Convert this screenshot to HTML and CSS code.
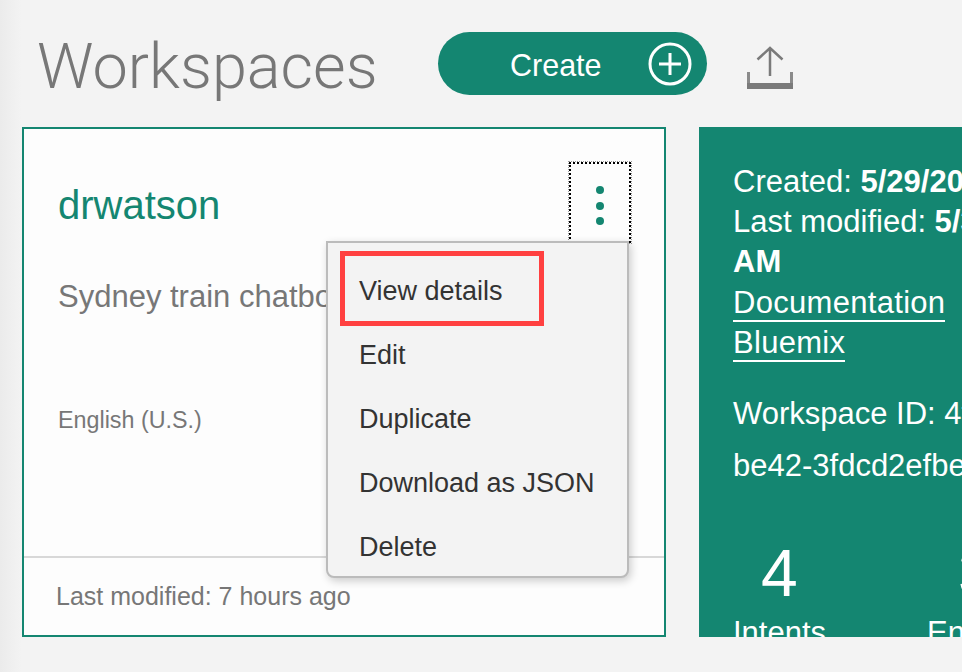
FILE: index.html
```html
<!DOCTYPE html>
<html lang="en">
<head>
  <meta charset="UTF-8">
  <meta name="viewport" content="width=device-width, initial-scale=1.0">
  <title>Workspaces</title>
  <link rel="stylesheet" href="styles.css">
</head>
<body>
  <div class="header">
    <h1>Workspaces</h1>
    <button class="create">
      <span class="create-label">Create</span>
      <svg class="plus" width="44" height="44" viewBox="0 0 44 44" fill="none" stroke="#fff">
        <circle cx="22" cy="22" r="20" stroke-width="3"/>
        <path d="M22 11v22M11 22h22" stroke-width="3"/>
      </svg>
    </button>
    <svg class="upload" width="46" height="43" viewBox="0 0 46 43" fill="none" stroke="#7a7a7a">
      <path d="M23 30V2M10.500 13.500L23 2l12.500 11.500" stroke-width="2.500"/>
      <path d="M1.500 26v14M44.500 26v14" stroke-width="3" stroke="#8a8a8a"/>
      <path d="M0 40h46" stroke-width="6"/>
    </svg>
  </div>

  <div class="row">
    <div class="card">
      <div class="card-main">
        <div class="card-top">
          <div class="card-name">drwatson</div>
          <div class="kebab"><i></i><i></i><i></i></div>
        </div>
        <div class="card-desc">Sydney train chatbot</div>
        <div class="card-lang">English (U.S.)</div>
      </div>
      <div class="card-foot">Last modified: 7 hours ago</div>

      <ul class="menu">
        <li>View details</li>
        <li>Edit</li>
        <li>Duplicate</li>
        <li>Download as JSON</li>
        <li>Delete</li>
      </ul>
      <div class="callout"></div>
    </div>

    <div class="panel">
      <div class="meta">
        <div>Created: <b>5/29/2017</b></div>
        <div>Last modified: <b>5/30/2017 10:21<br>AM</b></div>
        <div class="links">
          <div><a>Documentation</a></div>
          <div><a>Bluemix</a></div>
        </div>
      </div>
      <div class="ws-id">
        <div>Workspace ID: 4f1a93c2-7d1e-</div>
        <div class="ws-id-end">be42-3fdcd2efbe10</div>
      </div>
      <div class="stats">
        <div class="stat"><div class="num">4</div><div class="stat-label">Intents</div></div>
        <div class="stat"><div class="num">3</div><div class="stat-label">Entities</div></div>
      </div>
    </div>
  </div>
</body>
</html>
```

FILE: styles.css
```css
body {
  margin: 0;
  width: 962px;
  height: 672px;
  overflow: hidden;
  background: linear-gradient(to right, #ebebeb, #f3f3f3 22px);
  font-family: "Liberation Sans", Arial, sans-serif;
  color: #777;
}
.header {
  display: flex;
  align-items: center;
  height: 127px;
  padding-left: 37px;
  box-sizing: border-box;
}
h1 {
  margin: 6px 0 0;
  width: 401px;
  font-family: Roboto, sans-serif;
  font-weight: 300;
  font-size: 63px;
  color: #777;
}
.create {
  display: flex;
  align-items: center;
  width: 269px;
  height: 63px;
  padding: 0 15px 0 72px;
  border: none;
  border-radius: 32px;
  background: #148671;
  color: #fff;
  font-family: inherit;
  font-size: 30.500px;
}
.create-label {
  flex: 1;
  padding-top: 3px;
  text-align: left;
}
.upload {
  margin-left: 40px;
  margin-top: 8px;
}
.row {
  display: flex;
  gap: 33px;
  height: 510px;
  margin-left: 22px;
}
.card {
  position: relative;
  display: flex;
  flex-direction: column;
  flex: none;
  width: 644px;
  box-sizing: border-box;
  border: 2px solid #148671;
  background: #fdfdfd;
}
.card-main {
  flex: 1;
  padding: 33px 33px 0 34px;
}
.card-top {
  display: flex;
  justify-content: space-between;
}
.card-name {
  margin-top: 21px;
  font-size: 40px;
  line-height: 44px;
  color: #148671;
}
.kebab {
  display: flex;
  flex-direction: column;
  align-items: center;
  gap: 7.500px;
  width: 62px;
  height: 81px;
  box-sizing: border-box;
  padding-top: 22px;
  border: 2px dotted #000;
  outline: 1px dotted #999;
}
.kebab i {
  flex: none;
  width: 8px;
  height: 8px;
  border-radius: 50%;
  background: #148671;
}
.card-desc {
  margin-top: 34px;
  font-size: 31px;
  line-height: 40px;
}
.card-lang {
  margin-top: 88px;
  font-size: 23.300px;
  line-height: 30px;
}
.card-foot {
  height: 79px;
  box-sizing: border-box;
  padding: 23px 0 0 32px;
  border-top: 2px solid #d8d8d8;
  font-size: 25px;
  line-height: 30px;
}
.menu {
  position: absolute;
  left: 302px;
  top: 112px;
  width: 303px;
  height: 337px;
  box-sizing: border-box;
  margin: 0;
  padding: 16px 0 0 31px;
  list-style: none;
  border: 2px solid #bbb;
  border-radius: 0 0 8px 8px;
  background: #f3f3f3;
  box-shadow: 2px 3px 8px rgba(0, 0, 0, 0.2);
  color: #333;
  font-size: 27px;
}
.menu li {
  height: 64px;
  line-height: 64px;
}
.callout {
  position: absolute;
  left: 316px;
  top: 122px;
  width: 204px;
  height: 75px;
  box-sizing: border-box;
  border: 5px solid #ff4040;
}
.panel {
  flex: none;
  width: 263px;
  overflow: hidden;
  box-sizing: border-box;
  padding: 35px 0 0 34px;
  background: #148671;
  color: #fff;
  font-size: 31px;
  line-height: 40px;
  white-space: nowrap;
}
.links {
  margin-top: 1px;
  letter-spacing: 0.300px;
}
.meta a {
  border-bottom: 2px solid #fff;
}
.ws-id {
  margin-top: 31px;
}
.ws-id-end {
  margin-top: 12px;
}
.stats {
  display: flex;
  margin-top: 52px;
}
.stat {
  flex: none;
  width: 194px;
}
.stat + .stat .num {
  padding-left: 31px;
}
.num {
  padding-left: 28px;
  font-size: 66px;
  line-height: 70px;
}
.stat-label {
  margin-top: 5px;
}
```
